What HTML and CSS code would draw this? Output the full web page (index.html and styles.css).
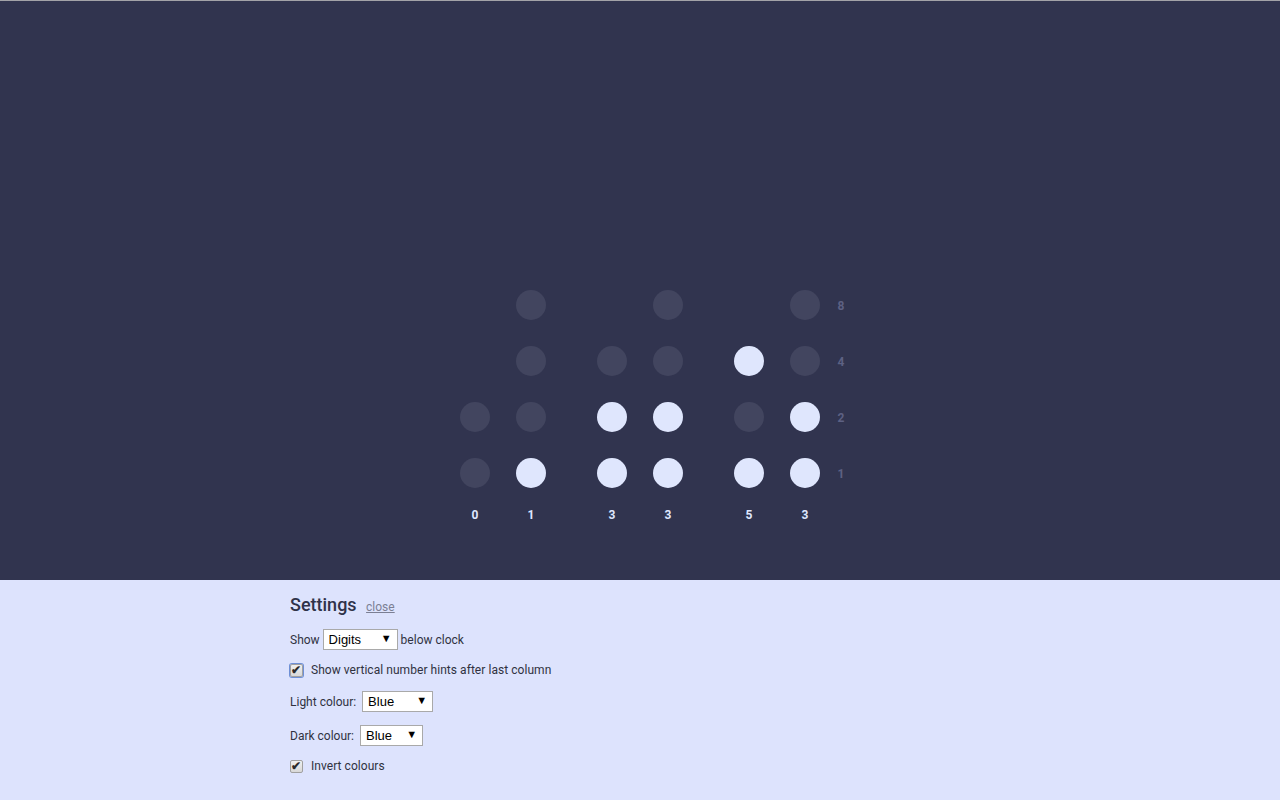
FILE: index.html
```html
<!DOCTYPE html>
<html>
<head>
<meta charset="utf-8">
<link rel="stylesheet" href="styles.css">
</head>
<body>
<main class="clock-area">
  <div class="clock">
    <div class="group">
      <div class="col">
        <div class="cell"></div><div class="cell"></div>
        <div class="cell dot"></div><div class="cell dot"></div>
        <div class="digit">0</div>
      </div>
      <div class="col">
        <div class="cell dot"></div><div class="cell dot"></div>
        <div class="cell dot"></div><div class="cell dot on"></div>
        <div class="digit">1</div>
      </div>
    </div>
    <div class="group">
      <div class="col">
        <div class="cell"></div><div class="cell dot"></div>
        <div class="cell dot on"></div><div class="cell dot on"></div>
        <div class="digit">3</div>
      </div>
      <div class="col">
        <div class="cell dot"></div><div class="cell dot"></div>
        <div class="cell dot on"></div><div class="cell dot on"></div>
        <div class="digit">3</div>
      </div>
    </div>
    <div class="group">
      <div class="col">
        <div class="cell"></div><div class="cell dot on"></div>
        <div class="cell dot"></div><div class="cell dot on"></div>
        <div class="digit">5</div>
      </div>
      <div class="col">
        <div class="cell dot"></div><div class="cell dot"></div>
        <div class="cell dot on"></div><div class="cell dot on"></div>
        <div class="digit">3</div>
      </div>
    </div>
    <div class="hints">
      <div class="cell">8</div><div class="cell">4</div>
      <div class="cell">2</div><div class="cell">1</div>
    </div>
  </div>
</main>
<section class="settings">
  <div class="inner">
    <h2 class="title">Settings <a class="close" href="#">close</a></h2>
    <div class="row">Show <span class="sel w-digits"><select><option>Digits</option></select></span> below clock</div>
    <div class="row check-row first"><span class="box focus">✔</span>Show vertical number hints after last column</div>
    <div class="row">Light colour: <span class="sel w-light wide-gap"><select><option>Blue</option></select></span></div>
    <div class="row">Dark colour: <span class="sel w-dark wide-gap"><select><option>Blue</option></select></span></div>
    <div class="row check-row"><span class="box">✔</span>Invert colours</div>
  </div>
</section>
</body>
</html>
```

FILE: styles.css
```css
html, body {
  margin: 0;
  padding: 0;
}
body {
  font-family: Roboto, "Liberation Sans", sans-serif;
  background: #dde3fd;
  border-top: 1px solid #a3a3a8;
}
.clock-area {
  background: #31344f;
  height: 579px;
  display: flex;
  justify-content: center;
  padding-top: 289px;
  box-sizing: border-box;
}
.clock {
  display: flex;
  gap: 51px;
  padding-left: 25px;
  align-items: flex-start;
}
.group {
  display: flex;
  gap: 26px;
}
.col {
  display: flex;
  flex-direction: column;
  gap: 26px;
  width: 30px;
  align-items: center;
}
.cell {
  width: 30px;
  height: 30px;
}
.dot {
  border-radius: 50%;
  background: #42455f;
}
.dot.on {
  background: #dfe6fd;
}
.digit {
  margin-top: -6px;
  font-size: 12px;
  font-weight: 700;
  line-height: 14px;
  color: #dfe7ff;
}
.hints {
  display: flex;
  flex-direction: column;
  gap: 26px;
  margin-left: -34px;
  padding-top: 1px;
}
.hints .cell {
  width: 8px;
  font-size: 12px;
  font-weight: 700;
  line-height: 30px;
  color: #5d6183;
  text-align: center;
}
.settings {
  height: 220px;
}
.inner {
  width: 700px;
  margin: 0 auto;
  padding-top: 14px;
  color: #30323f;
  font-size: 12px;
}
.title {
  margin: 0 0 11px;
  font-size: 18px;
  font-weight: 500;
  line-height: 22px;
  color: #2f3249;
}
.close {
  font-size: 12px;
  font-weight: 400;
  color: #7b7f94;
  margin-left: 5px;
}
.row {
  display: flex;
  align-items: center;
  gap: 3px;
  height: 21px;
  margin-bottom: 13px;
}
.check-row {
  height: 14px;
  margin-bottom: 17px;
  gap: 0;
  letter-spacing: 0.05px;
}
.check-row.first {
  margin-bottom: 14px;
}
.sel {
  position: relative;
  display: inline-block;
  height: 21px;
}
.sel.wide-gap {
  margin-left: 3px;
}
.sel select {
  appearance: none;
  -webkit-appearance: none;
  width: 100%;
  height: 21px;
  box-sizing: border-box;
  border: 1px solid #a9a9a9;
  border-radius: 0;
  background: #fff;
  font-family: "Liberation Sans", Arial, sans-serif;
  font-size: 13px;
  color: #000;
  padding: 0 0 0 5px;
  margin: 0;
}
.sel::after {
  content: "▼";
  position: absolute;
  right: 6px;
  top: 4px;
  font-size: 11px;
  line-height: 12px;
  color: #000;
  pointer-events: none;
}
.w-digits { width: 75px; }
.w-light { width: 71px; }
.w-dark { width: 63px; }
.box {
  width: 11px;
  height: 11px;
  border: 1px solid #a0a0a0;
  border-radius: 2px;
  background: linear-gradient(#f0f0f0, #d8d8d8);
  font-size: 12px;
  font-weight: 700;
  line-height: 11px;
  text-align: center;
  color: #2a2a2a;
  margin-left: 0;
  margin-right: 8px;
  flex: none;
}
.box.focus {
  box-shadow: 0 0 0 1px #6d8fd6;
}
```
